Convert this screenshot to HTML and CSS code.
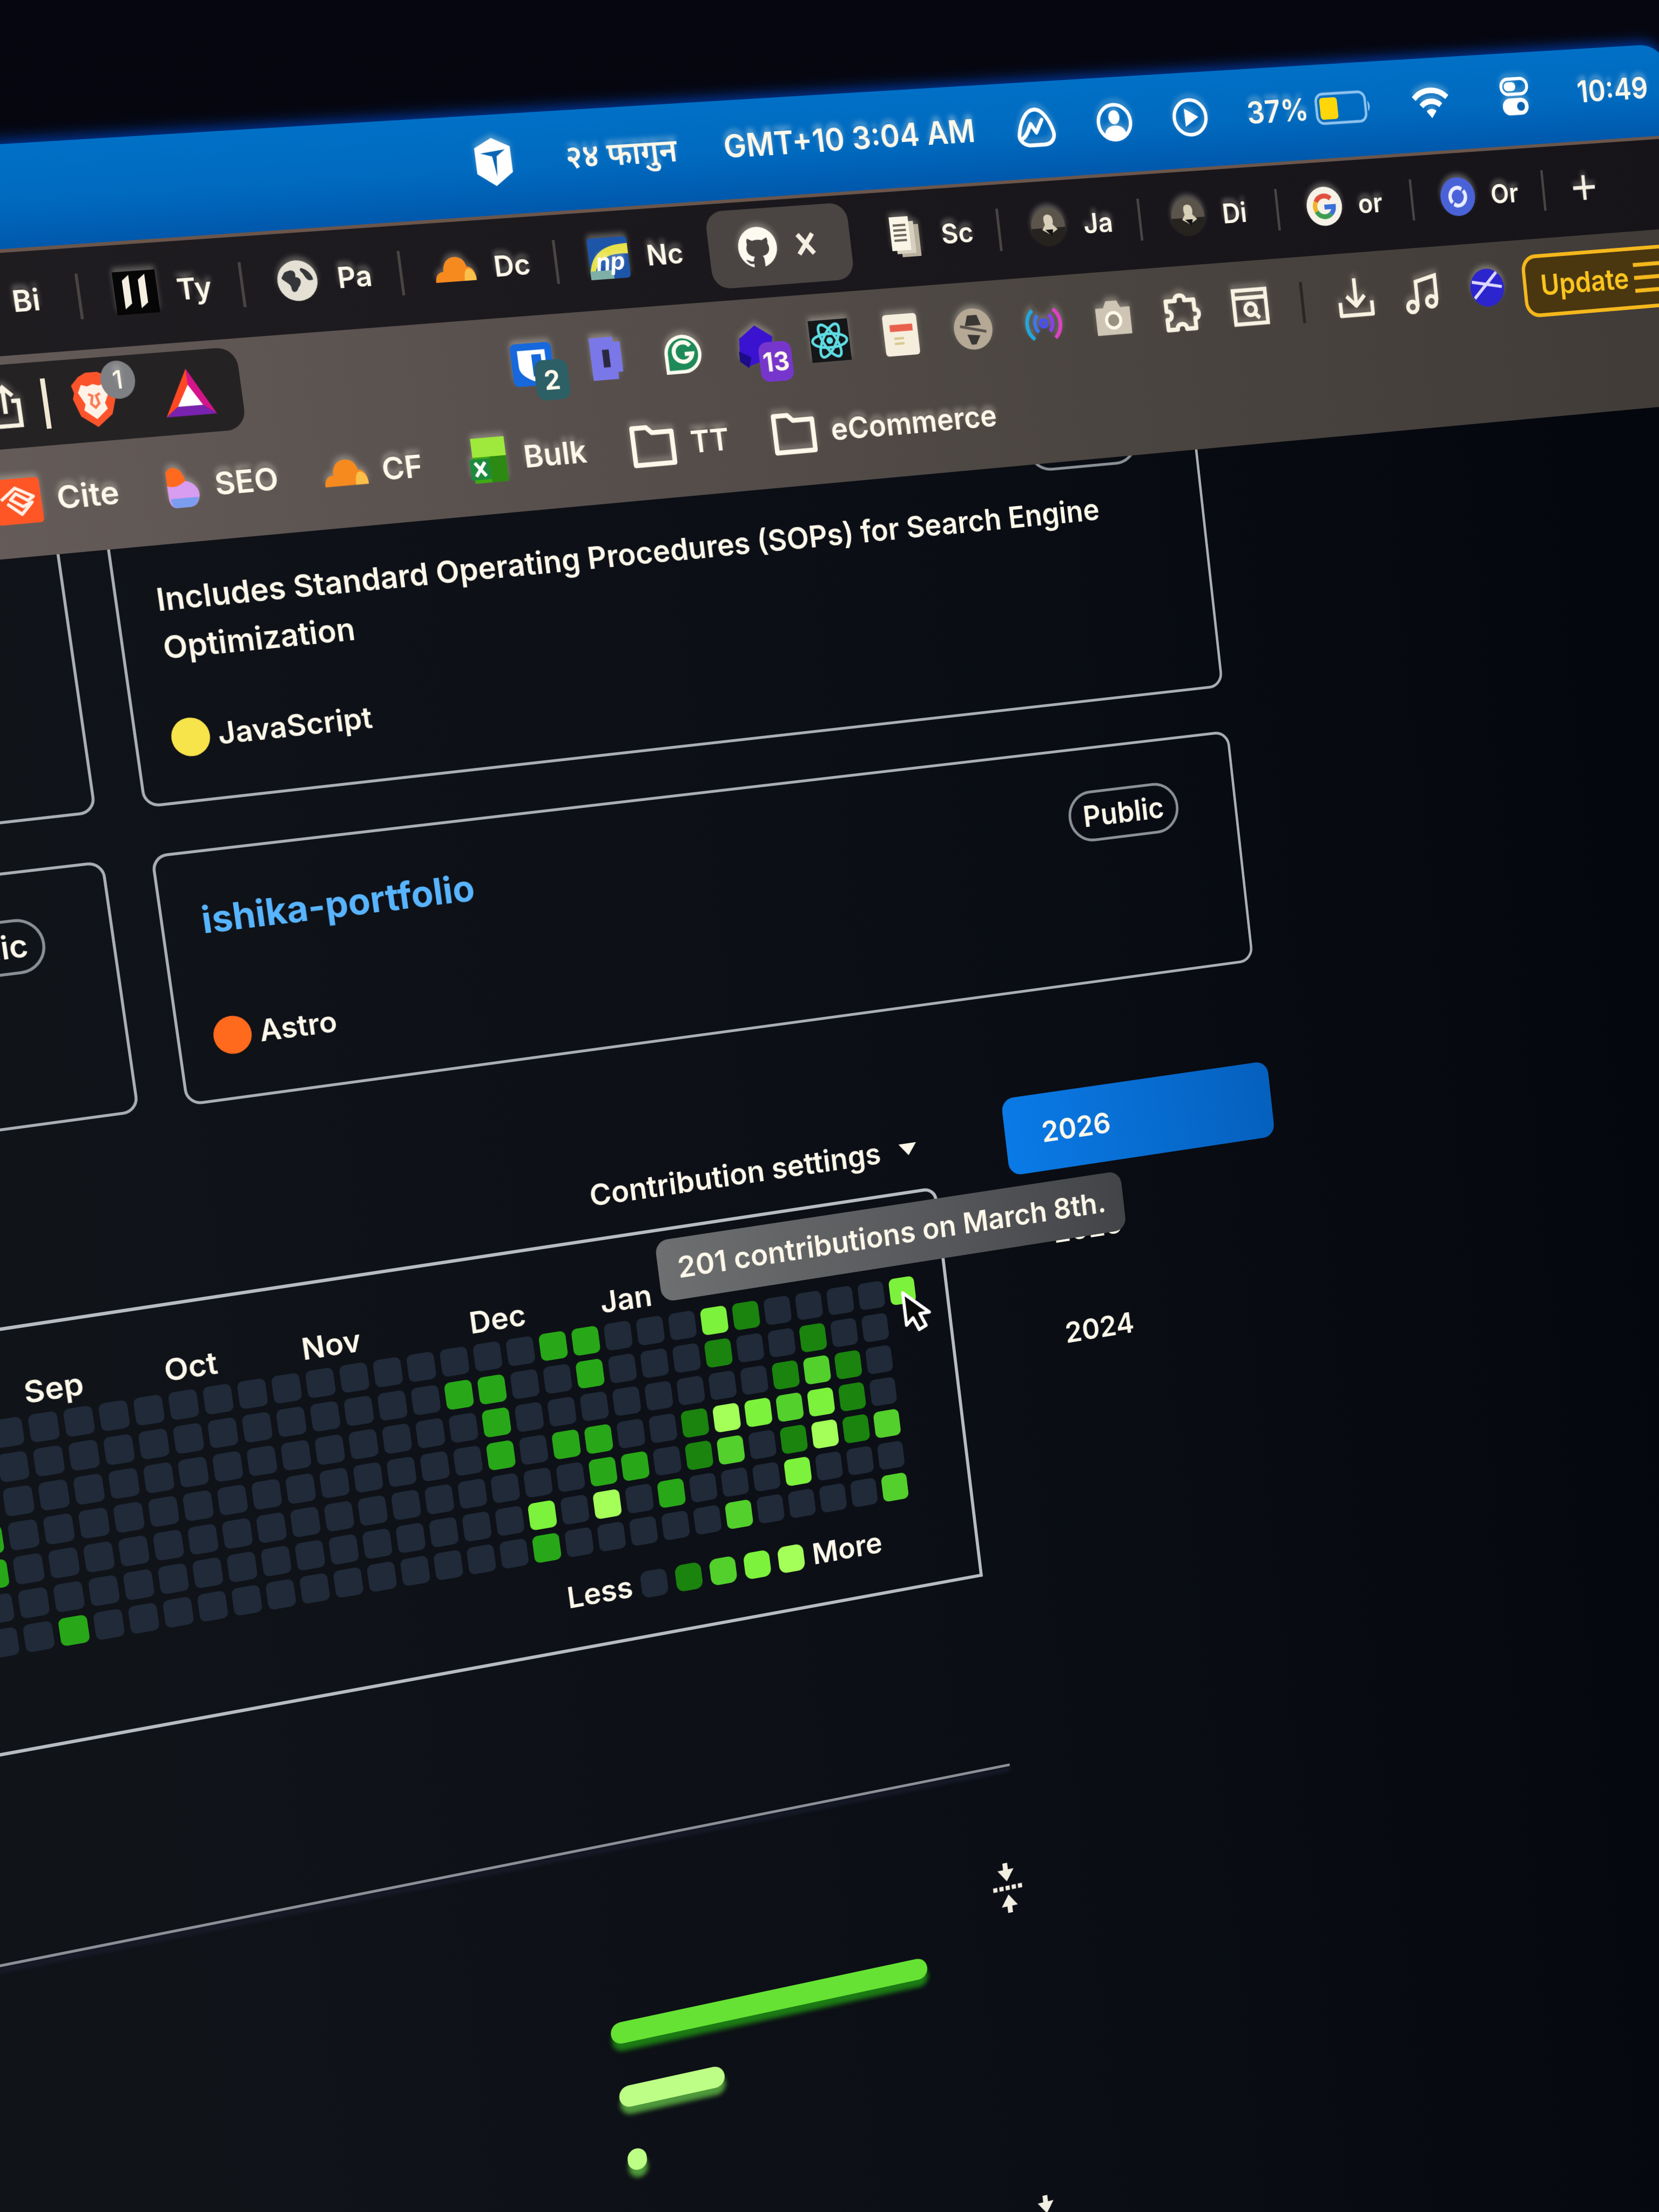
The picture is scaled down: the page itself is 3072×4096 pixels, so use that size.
FILE: index.html
```html
<!DOCTYPE html>
<html lang="en">
<head>
<meta charset="utf-8">
<title>GitHub profile</title>
<link rel="stylesheet" href="styles.css">
</head>
<body>
<div class="screen">

  <header class="menubar">
    <svg class="mi cube" viewBox="0 0 24 26"><path d="M12 0l10 5v14L12 26 2 19V5z" fill="#fff"/><path d="M5 8l14-1.500-5 3.500-1 11-1.500-11z" fill="#0a66b4"/></svg>
    <span class="date" lang="ne">२४ फागुन</span>
    <span>GMT+10 3:04 AM</span>
    <svg class="mi arc" viewBox="0 0 24 24" fill="none" stroke="#fff" stroke-width="2.200" stroke-linecap="round" stroke-linejoin="round"><path d="M1.500 16C3 8 7 2 12 2s9 7 10.500 13c.8 4-2 7-6 7H8c-4 0-7-3-6.500-6z"/><path d="M3 18c3-1 5-6 6-8l3 5 4-7"/></svg>
    <svg class="mi" viewBox="0 0 24 24"><circle cx="12" cy="12" r="10.500" fill="none" stroke="#fff" stroke-width="2.200"/><ellipse cx="12" cy="9" rx="3.600" ry="4.200" fill="#fff"/><path d="M5 19c1-4 4-5 7-5s6 1 7 5c-4 4-10 4-14 0z" fill="#fff"/></svg>
    <svg class="mi" viewBox="0 0 24 24"><circle cx="12" cy="12" r="10.500" fill="none" stroke="#fff" stroke-width="2.200"/><path d="M8.500 6.500l9 5.500-9 5.500z" fill="#fff"/></svg>
    <span class="battery">37%
      <svg viewBox="0 0 58 30"><rect x="1.500" y="1.500" width="50" height="27" rx="7" fill="none" stroke="#8fc3ee" stroke-width="2.500"/><rect x="5" y="5" width="18" height="20" rx="3" fill="#ffd60a"/><path d="M54 10q4 5 0 10z" fill="#8fc3ee"/></svg>
    </span>
    <svg class="mi wifi" viewBox="0 0 28 22" fill="none" stroke="#fff" stroke-width="3.600"><path d="M2 8.500a17 17 0 0 1 24 0"/><path d="M7 13.500a10 10 0 0 1 14 0"/><path d="M14 21.500l-3.500-4.500a5 5 0 0 1 7 0z" fill="#fff" stroke="none"/></svg>
    <svg class="mi ctl" viewBox="0 0 20 24"><rect x="1" y="1" width="18" height="9.500" rx="4.700" fill="none" stroke="#fff" stroke-width="2"/><rect x="3" y="3" width="8" height="5.500" rx="2.700" fill="#fff"/><rect x="1" y="13" width="18" height="10.500" rx="5.200" fill="#fff"/><rect x="11" y="15.500" width="5.500" height="5.500" rx="2.700" fill="#0a63b0"/></svg>
    <time class="clock">10:49</time>
  </header>

  <nav class="tabs">
    <a class="tab plain" href="#bi"><span class="fav"></span><span class="lbl">Bi</span></a>
    <a class="tab" href="#ty"><svg class="fav" viewBox="0 0 24 24"><path d="M0 0h24v24H0z" fill="#060607"/><path d="M5 21V5l4-3v16zM14 21V5l4-3v16z" fill="#f4efe0"/></svg><span class="lbl">Ty</span></a>
    <a class="tab" href="#pa"><svg class="fav" viewBox="0 0 24 24"><circle cx="12" cy="12" r="11.500" fill="#e4e0d4"/><path d="M5 7c4-2 7-1 6 3 3 0 4 3 1 6-1 3-4 3-4 0 0-3-4-4-5-6zM15 5c3 1 6 4 6 7-3 1-4-1-5-3s-3-3-1-4z" fill="#34363a"/></svg><span class="lbl">Pa</span></a>
    <a class="tab" href="#dc"><svg class="fav" viewBox="0 0 24 24"><path d="M0 19c0-4 2-6 5-6 0-5 3-8 7-8s6 2 7 6c3 0 5 3 5 8z" fill="#f68a1f"/><path d="M17 19c0-5 1-7 3-7 3 1 4 4 4 7z" fill="#fbc04b"/></svg><span class="lbl">Dc</span></a>
    <a class="tab" href="#nc"><svg class="fav" viewBox="0 0 24 24"><rect width="24" height="24" rx="2" fill="#1d55a8"/><path d="M0 20C2 9 9 4 24 4v6C12 9 6 12 3 20z" fill="#e8e24a"/><path d="M0 19h14v5H0z" fill="#7fb0a8"/><text x="4" y="19" font-family="Inter" font-size="14" font-style="italic" font-weight="700" fill="#fff">np</text></svg><span class="lbl">Nc</span></a>
    <a class="tab plain active" href="#gh"><svg class="fav" viewBox="0 0 24 24"><circle cx="12" cy="12" r="12" fill="#fdfaf0"/><path d="M6 6.500l3 1.500c2-.6 4-.6 6 0l3-1.500c.7 1.500.6 2.600.3 3.400 1.800 3.500.2 7-3.800 7.300 1 1 1 2 1 7H8.800v-2.800c-3 .6-3.500-1.600-4.800-2.400 2-.4 2.300 1.500 4.800.9 0-1 .2-1.800.9-2.600C5.600 16.800 4 13.500 5.700 9.900c-.3-.8-.4-1.900.3-3.400z" fill="#4a4443"/></svg><button class="close" type="button" aria-label="Close tab"><svg viewBox="0 0 12 14"><path d="M2 2l8 10M10 2L2 12" stroke="#f5efe2" stroke-width="2.400"/></svg></button></a>
    <a class="tab plain" href="#sc"><svg class="fav" viewBox="0 0 24 24"><path d="M9 5h12v19H9z" fill="#b8b09c"/><path d="M6 3h12v19H6z" fill="#d6d0bf"/><path d="M3 0h12v20H3z" fill="#faf5e6"/><path d="M5 5h8M5 8h8M5 11h8M5 14h8" stroke="#6b675f" stroke-width="1.300"/></svg><span class="lbl">Sc</span></a>
    <a class="tab" href="#ja"><svg class="fav" viewBox="0 0 24 24"><circle cx="12" cy="12" r="11" fill="#5a544a"/><path d="M1 13a11 11 0 0 0 22 0z" fill="#26231f"/><path d="M12 5c3 0 4 3 3 6l3 3-5 3-5-3 2-3c-1-3-1-6 2-6z" fill="#d8cfb8"/><path d="M10 14h5l-1 4z" fill="#111"/></svg><span class="lbl">Ja</span></a>
    <a class="tab" href="#di"><svg class="fav" viewBox="0 0 24 24"><circle cx="12" cy="12" r="11" fill="#5a544a"/><path d="M1 13a11 11 0 0 0 22 0z" fill="#26231f"/><path d="M12 5c3 0 4 3 3 6l3 3-5 3-5-3 2-3c-1-3-1-6 2-6z" fill="#d8cfb8"/><path d="M10 14h5l-1 4z" fill="#111"/></svg><span class="lbl">Di</span></a>
    <a class="tab" href="#or1"><svg class="fav" viewBox="0 0 24 24"><circle cx="12" cy="12" r="12" fill="#f6f2e8"/><g fill="none" stroke-width="3"><path d="M16.500 7.500A6.300 6.300 0 0 0 6.500 9" stroke="#e0503c"/><path d="M6.500 9a6.300 6.300 0 0 0 0 6" stroke="#f0b428"/><path d="M6.500 15a6.300 6.300 0 0 0 9.500 2" stroke="#3c9c50"/><path d="M16 17a6 6 0 0 0 2.300-4.500H12" stroke="#3a6fd8"/></g></svg><span class="lbl">or</span></a>
    <a class="tab" href="#or2"><svg class="fav" viewBox="0 0 24 24"><circle cx="12" cy="12" r="12" fill="#4a62d8"/><g fill="none" stroke="#e8ecff" stroke-width="2.400"><path d="M8 15.500A5.500 5.500 0 0 1 13 6.500l2 1"/><path d="M16 8.500a5.500 5.500 0 0 1-5 9l-2-1"/></g></svg><span class="lbl">Or</span></a>
    <button class="tab newtab" type="button" aria-label="New tab"><svg viewBox="0 0 14 14"><path d="M7 1v12M1 7h12" stroke="#f5efe2" stroke-width="1.800"/></svg></button>
  </nav>

  <div class="toolbar">
    <div class="tools">
      <div class="address">
        <svg class="share" viewBox="0 0 20 26" fill="none" stroke="#f8f2e2" stroke-width="2.400"><path d="M6 10H2v14h16V10h-4M10 17V2M5 7l5-5 5 5"/></svg>
        <i class="bar"></i>
        <span class="brave"><svg viewBox="0 0 24 28"><path d="M5 2l4-2h6l4 2 4 4-1 4 1 3-3 9-8 6-8-6-3-9 1-3-1-4z" fill="#fb542b"/><path d="M6 6l3 1 3-1 3 1 3-1 2 4-3 6 1 3-6 5-6-5 1-3-3-6z" fill="#fff3e8"/><path d="M9 11l2 1-1 4 2 2 2-2-1-4 2-1" fill="none" stroke="#fb7a55" stroke-width="1.300"/></svg><b>1</b></span>
        <svg class="bat" viewBox="0 0 24 22"><path d="M12 0L0 22l6-4.500L12 8z" fill="#ff4724"/><path d="M12 0l12 22-6-4.500L12 8z" fill="#d4148a"/><path d="M0 22h24l-6-4.500H6z" fill="#7a22b0"/><path d="M12 7.500l6 10H6z" fill="#fff"/></svg>
      </div>
      <div class="exts">
        <span class="slot"><svg viewBox="0 0 24 24"><rect width="24" height="24" rx="3" fill="#1668dc"/><path d="M4 4h16v9c0 4-4 6.500-8 8.500C8 19.500 4 17 4 13z" fill="#fff"/><path d="M12 6.500h5.500V13c0 2.500-2.500 4.300-5.500 6z" fill="#1668dc"/></svg><b class="badge teal">2</b></span>
        <span class="slot"><svg viewBox="0 0 24 24"><path d="M2 0h14v3h4v17h-3v4H2z" fill="#7a78e8"/><path d="M9 7h4v10H9z" fill="#2a2840"/></svg></span>
        <span class="slot"><svg viewBox="0 0 24 24"><path d="M1 24V12A11 11 0 1 1 12 24z" fill="#fdfaf0"/><path d="M3 22V12a9 9 0 1 1 9 10z" fill="#1d8a58"/><path d="M16.500 8.500a5.500 5.500 0 1 0 1 4.500H13" fill="none" stroke="#fdfaf0" stroke-width="2.400"/></svg></span>
        <span class="slot"><svg viewBox="0 0 24 24"><path d="M12 0l10 7-2 12-14 4-5-4L2 7z" fill="#3a12d0"/><path d="M1 14l7 4-2 6-5-4z" fill="#1c0c86"/></svg><b class="badge violet">13</b></span>
        <span class="slot"><svg viewBox="0 0 24 24"><rect width="24" height="24" fill="#141618"/><g fill="none" stroke="#5fdde4" stroke-width="1.600"><ellipse cx="12" cy="12" rx="10.500" ry="4"/><ellipse cx="12" cy="12" rx="10.500" ry="4" transform="rotate(60 12 12)"/><ellipse cx="12" cy="12" rx="10.500" ry="4" transform="rotate(120 12 12)"/></g><circle cx="12" cy="12" r="2" fill="#5fdde4"/></svg></span>
        <span class="slot"><svg viewBox="0 0 24 24"><rect x="1" width="21" height="24" rx="2" fill="#f6eedd"/><path d="M5 6h14v4H5z" fill="#e8604c"/><path d="M7 14h6M7 17h6" stroke="#d8c890" stroke-width="1.400"/></svg></span>
        <span class="slot"><svg viewBox="0 0 24 24"><circle cx="12" cy="12" r="12" fill="#b5a996"/><path d="M9 4h6l2 6H7zM8 15l8 1-3 5h-3z" fill="#3a3633"/><path d="M4 10l16 4" stroke="#5a534c" stroke-width="1.600"/></svg></span>
        <span class="slot"><svg viewBox="0 0 24 24" fill="none" stroke-width="2.200"><path d="M5.500 21a11 11 0 0 1 0-17" stroke="#1fa8e0"/><path d="M8.500 17a7 7 0 0 1 0-10" stroke="#3a78f0"/><path d="M18.500 21a11 11 0 0 0 0-17" stroke="#e040c8"/><path d="M15.500 17a7 7 0 0 0 0-10" stroke="#8a3ef0"/><circle cx="12" cy="12" r="2" stroke="#4a50f0"/></svg></span>
        <span class="slot"><svg viewBox="0 0 24 24"><path d="M1 6h5l2-4h7l2 4h6v16H1z" fill="#cfc5b4"/><circle cx="12" cy="13.500" r="4.500" fill="#9a9082" stroke="#fdf8ea" stroke-width="2"/></svg></span>
        <span class="slot"><svg viewBox="0 0 24 24" fill="none" stroke="#f8f2e2" stroke-width="2.600" stroke-linejoin="round"><path d="M2 5h6c-.8-4 6.800-4 6 0h6v6c3.500-.5 3.500 5.500 0 5v6h-6c.5-4-6.500-4-6 0H2v-6c4 .5 4-5.500 0-5z"/></svg></span>
        <span class="slot"><svg viewBox="0 0 24 24" fill="none" stroke="#f8f2e2" stroke-width="2.400"><path d="M1.500 2h21v20h-21zM1.500 6.500h21"/><circle cx="12" cy="13.500" r="3.500"/><path d="M14.500 16l3 3"/></svg></span>
        <i class="divider"></i>
        <span class="slot"><svg viewBox="0 0 24 24" fill="none" stroke="#f8f2e2" stroke-width="2.400" stroke-linejoin="round"><path d="M1.500 14v8h21v-8M12 0v16M6 10.500l6 6 6-6"/></svg></span>
        <span class="slot"><svg viewBox="0 0 24 24" fill="none" stroke="#f8f2e2" stroke-width="2.400"><path d="M8.500 20V5L21.500 2v15"/><circle cx="5" cy="20" r="3.200"/><circle cx="18" cy="17.500" r="3.200"/></svg></span>
        <span class="slot"><svg viewBox="0 0 24 24"><circle cx="12" cy="12" r="11.500" fill="#2c24cc"/><path d="M2 8l20 4M19 3L3 18" stroke="#dcd8ff" stroke-width="1.900"/></svg></span>
      </div>
      <button class="update" type="button">Update <svg viewBox="0 0 20 20"><path d="M0 3h20M0 10h20M0 17h20" stroke="#f5b81c" stroke-width="2.200"/></svg></button>
    </div>

    <nav class="bookmarks">
      <a href="#cite"><svg viewBox="0 0 24 24"><rect width="24" height="24" rx="2" fill="#ff5626"/><path d="M3 11l8-6 9 5-3 2-6-4-3 3 6 4 5-2-6 6-7-6" fill="none" stroke="#fff0e6" stroke-width="1.700" stroke-linejoin="round"/></svg>Cite</a>
      <a href="#seo"><svg class="slim" viewBox="0 0 18 22"><path d="M1 3c3-5 10-2 10 6l-10 5z" fill="#ff6a1e"/><path d="M1 10c5 2 8-1 10-2 5 1 8 6 6 10-1 3-3 4-6 4H5c-3 0-4-3-4-6z" fill="#d89cf0"/><path d="M2 17h15c-1 4-3 5-6 5H5c-2 0-3-2-3-5z" fill="#7c9cf0"/></svg>SEO</a>
      <a href="#cf"><svg viewBox="0 0 24 24"><path d="M0 19c0-4 2-6 5-6 0-5 3-8 7-8s6 2 7 6c3 0 5 3 5 8z" fill="#f68a1f"/><path d="M17 19c0-5 1-7 3-7 3 1 4 4 4 7z" fill="#fbc04b"/></svg>CF</a>
      <a href="#bulk"><svg viewBox="0 0 24 26"><path d="M3 0h20v26H3z" fill="#3faa14"/><path d="M3 0h20v11H3z" fill="#9fe83c"/><path d="M13 11h10v15H13z" fill="#2c8a12"/><path d="M1 12h12v12H1z" fill="#1e8a3c"/><path d="M4 14l6 8M10 14l-6 8" stroke="#fff" stroke-width="2"/></svg>Bulk</a>
      <a href="#tt"><svg class="folder" viewBox="0 0 26 24" fill="none" stroke="#fdf8ea" stroke-width="2.600" stroke-linejoin="round"><path d="M2 2h8l3 3h11v17H2z"/></svg>TT</a>
      <a href="#ecommerce"><svg class="folder" viewBox="0 0 26 24" fill="none" stroke="#fdf8ea" stroke-width="2.600" stroke-linejoin="round"><path d="M2 2h8l3 3h11v17H2z"/></svg>eCommerce</a>
    </nav>
  </div>

  <main class="viewport">
    <div class="page">
      <section class="repos">
        <article class="repo tall"></article>
        <article class="repo tall">
          <div class="repo-head"><span class="pill">Public</span></div>
          <p>Includes Standard Operating Procedures (SOPs) for Search Engine Optimization</p>
          <div class="lang"><i class="dot js"></i>JavaScript</div>
        </article>
        <article class="repo">
          <div class="repo-head"><span class="pill">Public</span></div>
        </article>
        <article class="repo">
          <div class="repo-head"><a href="#ishika-portfolio">ishika-portfolio</a><span class="pill">Public</span></div>
          <div class="lang"><i class="dot astro"></i>Astro</div>
        </article>
      </section>

      <section class="contrib">
        <div class="graph">
          <div class="graph-head"><button class="settings" type="button">Contribution settings <svg viewBox="0 0 14 9"><path d="M0 0h14L7 9z" fill="#fdf8ea"/></svg></button></div>
          <div class="calendar">
            <table>
              <thead><tr><th colspan="4"></th><th colspan="4">Sep</th><th colspan="4">Oct</th><th colspan="5">Nov</th><th colspan="4">Dec</th><th colspan="10">Jan</th></tr></thead>
              <tbody id="days"></tbody>
            </table>
            <div class="legend">Less<i class="l0"></i><i class="l1"></i><i class="l3"></i><i class="l4"></i><i class="l5"></i>More</div>
          </div>
        </div>
        <nav class="years">
          <a class="current" href="#2026">2026</a>
          <a href="#2025">2025</a>
          <a href="#2024">2024</a>
        </nav>
      </section>

      <section class="activity">
        <hr>
        <div class="fold"><svg viewBox="0 0 20 30"><path d="M10 11l-5-7h3.500V0h3v4H15zM10 19l5 7h-3.500v4h-3v-4H5z" fill="#f3eee2"/><path d="M1 15h18" stroke="#f3eee2" stroke-width="2.600" stroke-dasharray="2.600 1.250"/></svg></div>
        <div class="bars">
          <div class="meter green" style="width:610px"></div>
          <div class="meter lime" style="width:200px"></div>
          <div class="meter lime" style="width:36px"></div>
        </div>
        <div class="fold last"><svg viewBox="0 0 20 30"><path d="M10 11l-5-7h3.500V0h3v4H15zM10 19l5 7h-3.500v4h-3v-4H5z" fill="#f3eee2"/><path d="M1 15h18" stroke="#f3eee2" stroke-width="2.600" stroke-dasharray="2.600 1.250"/></svg></div>
      </section>
    </div>
  </main>
</div>

<template id="hover">
  <span class="tip" role="tooltip">201 contributions on March 8th.</span>
  <svg class="cursor" viewBox="0 0 24 36"><path d="M2 2v26l6-5 4 10 6-2.500-4-10h8z" fill="#0a0a0a" stroke="#fff" stroke-width="2.600" stroke-linejoin="round"/></svg>
</template>
<script src="calendar.js"></script>
</body>
</html>
```
FILE: calendar.js
```js
// One string per weekday, one digit per week: the contribution level.
const weekdays = [
  "0000000000000000000220004100004",
  "000000000000000022002000100100",
  "000000000000000002000000001310",
  "002000000000000002022001543410",
  "002000000000000000002201301513",
  "000000000000000000405020004000",
  "000020000000000000200000300003"
];
const body = document.getElementById("days");
weekdays.forEach((row, weekday) => {
  const tr = document.createElement("tr");
  [...row].forEach((level, week) => {
    const td = document.createElement("td");
    td.className = "l" + level;
    if (weekday === 0 && week === row.length - 1) {
      td.append(document.getElementById("hover").content.cloneNode(true));
    }
    tr.append(td);
  });
  body.append(tr);
});
```
FILE: styles.css
```css
* { box-sizing: border-box; }

html, body { height: 100%; overflow: hidden; }

body {
  margin: 0;
  background: linear-gradient(180deg, #05060f, #04060c 40%, #06080d);
  color: #fdf8ea;
  font: 600 54px/1.2 Inter, "Noto Sans", "Liberation Sans", sans-serif;
}

a { color: inherit; text-decoration: none; }
button { font: inherit; color: inherit; background: none; border: 0; padding: 0; }
svg { display: block; flex: none; }

/* The display, seen at an angle */
.screen {
  width: 122vw;
  margin-left: -600px;
  transform-origin: 600px 0;
  transform: matrix3d(1.12316, -0.055464, 0, 0.0000462203, 0.161361, 1.12779, 0, 0.0000173506, 0, 0, 1, 0, 0, 267, 0, 1);
}

/* Menu bar */
.menubar {
  display: flex;
  align-items: center;
  justify-content: flex-end;
  gap: 78px;
  height: 178px;
  padding: 0 50px 10px 0;
  border-radius: 0 60px 0 0;
  border-bottom: 6px solid #6b564c;
  background: linear-gradient(180deg, #0070c6, #006abf 55%, #0058ab);
  box-shadow: 0 -6px 24px #0038a0;
  white-space: nowrap;
  font-size: 56px;
}
.mi { width: 72px; height: 76px; }
.mi.cube { width: 76px; height: 84px; }
.date { margin: 0 8px 0 12px; }
.mi.arc { width: 80px; }
.mi.wifi { width: 80px; height: 64px; margin: 0 16px 0 4px; }
.mi.ctl { width: 60px; margin: 0 24px 0 12px; }
.battery { display: flex; align-items: center; gap: 14px; }
.battery svg { width: 116px; height: 60px; }

/* Upward bloom of the bright glyphs on the bars */
.menubar, .tabs, .toolbar { text-shadow: 0 -8px 8px rgba(255, 250, 235, .35); }
.mi, .fav, .slot svg, .bookmarks svg, .share, .newtab svg { filter: drop-shadow(0 -7px 5px rgba(255, 250, 235, .28)); }

/* Tab strip */
.tabs {
  display: flex;
  align-items: center;
  height: 170px;
  padding: 0 0 8px 416px;
  background: linear-gradient(90deg, #211e22, #1a181c 50%, #161419);
  font-size: 50px;
}
.tab {
  position: relative;
  display: flex;
  align-items: center;
  flex: none;
  gap: 33px;
  width: 276px;
  height: 76px;
  padding-left: 57px;
  border-left: 5px solid #4a4443;
}
.tab.plain { border-color: transparent; }
.fav { width: 72px; height: 76px; flex: none; }
.tab.active {
  width: 264px;
  height: 136px;
  margin: 0 6px;
  padding-left: 54px;
  border: 0;
  border-radius: 32px;
  background: #4a4443;
}
.close svg { width: 42px; height: 50px; }
.newtab svg { width: 54px; height: 54px; }

/* Toolbar */
.toolbar {
  height: 336px;
  background: linear-gradient(90deg, #655c59 12%, #574f4c 40%, #49443f 70%, #403b37);
}
.tools { display: flex; align-items: center; height: 168px; }
.address {
  display: flex;
  align-items: center;
  justify-content: flex-end;
  flex: 1;
  height: 140px;
  padding-right: 47px;
  border-radius: 0 34px 34px 0;
  background: #252224;
}
.share { width: 60px; height: 76px; }
.bar { width: 8px; height: 84px; margin: 0 38px 0 34px; background: #f0e8d4; }
.brave { position: relative; margin-right: 76px; }
.brave svg { width: 80px; height: 92px; }
.brave b {
  position: absolute;
  top: -16px;
  right: -32px;
  width: 58px;
  height: 64px;
  border-radius: 50%;
  background: #7f8084;
  font: 500 42px/64px Inter, sans-serif;
  text-align: center;
}
.bat { width: 86px; height: 84px; }
.exts { display: flex; align-items: center; margin: 0 7px 0 444px; }
.slot { position: relative; display: grid; place-items: center; width: 137px; }
.slot svg { width: 74px; height: 76px; }
.badge {
  position: absolute;
  top: 32px;
  left: 70px;
  min-width: 60px;
  height: 70px;
  padding: 0 6px;
  border-radius: 16px;
  font: 700 46px/70px Inter, sans-serif;
  text-align: center;
  text-shadow: none;
}
.teal { background: #2c5f66; }
.violet { background: #7636cc; }
.divider { width: 6px; height: 76px; margin: 0 38px 0 34px; background: #2a2625; }
.update {
  display: flex;
  align-items: center;
  flex: none;
  gap: 12px;
  width: 356px;
  height: 118px;
  margin-top: 8px;
  padding-left: 30px;
  border: 7px solid #f5b81c;
  border-radius: 30px;
  background: #4a3710;
  color: #ffc61e;
  text-shadow: none;
}
.update svg { width: 70px; height: 70px; }

.bookmarks { display: flex; align-items: center; gap: 79px; height: 148px; padding-left: 508px; }
.bookmarks a { display: flex; align-items: center; gap: 26px; }
.bookmarks svg { width: 76px; height: 78px; }
.bookmarks svg.slim { width: 58px; height: 70px; }
.bookmarks svg.folder { width: 86px; }

/* Web page */
.viewport { overflow: hidden; background: linear-gradient(90deg, #101318 12%, #0b0e15 55%, #04060d); }
.page { margin-top: -161px; padding: 0 1058px 400px 0; }

.repos {
  display: grid;
  grid-template-columns: repeat(2, 2009px);
  justify-content: end;
  gap: 81px 80px;
}
.repo {
  display: flex;
  flex-direction: column;
  height: 436px;
  padding: 76px 66px 72px;
  border: 5px solid #a9afb4;
  border-radius: 28px;
}
.repo.tall { height: 602px; }
.repo-head { display: flex; align-items: center; height: 94px; }
.repo-head a { padding-bottom: 14px; color: #58b4ff; font-size: 64px; font-weight: 700; }
.pill {
  margin: 0 46px 0 auto;
  height: 94px;
  padding: 0 24px;
  border: 5px solid #8a9096;
  border-radius: 47px;
  line-height: 84px;
}
.repo p { margin: 37px 0 0; line-height: 82px; }
.lang { display: flex; align-items: center; gap: 14px; margin: auto 0 0 -8px; font-size: 52px; line-height: 70px; }
.dot { width: 66px; height: 66px; border-radius: 50%; }
.js { background: #f7e34a; }
.astro { background: #ff6a1c; }

.contrib { display: flex; gap: 145px; margin-top: 190px; }
.graph { flex: 1; min-width: 0; }
.graph-head { display: flex; align-items: center; justify-content: flex-end; height: 143px; padding: 0 28px 8px 0; }
.settings { display: flex; align-items: center; gap: 36px; }
.settings svg { width: 34px; height: 22px; }
.calendar {
  display: flex;
  flex-direction: column;
  align-items: flex-end;
  padding: 76px 47px 62px 0;
  border: 6px solid #b6bcc2;
  border-radius: 0 24px 0 0;
}
.calendar table { border-spacing: 11px; table-layout: fixed; width: 1871px; }
.calendar th { height: 53px; padding: 0; font-weight: 600; line-height: 49px; text-align: left; vertical-align: top; }
.calendar td { position: relative; height: 49px; padding: 0; border-radius: 10px; }
.legend { display: flex; align-items: center; gap: 16px; height: 60px; margin: 32px 133px 0 0; }
.legend i { width: 49px; height: 49px; border-radius: 14px; }
.l0 { background: #202a39; }
.l1 { background: #1a840e; }
.l2 { background: #28a818; }
.l3 { background: #53d02c; }
.l4 { background: #7cf23c; }
.l5 { background: #a4ff58; }

.tip {
  position: absolute;
  left: 50%;
  bottom: 72px;
  z-index: 2;
  height: 112px;
  padding: 0 36px;
  border-radius: 24px;
  background: linear-gradient(90deg, #6e6f70, #56575a 60%, #434447);
  line-height: 108px;
  white-space: nowrap;
  transform: translateX(-50%);
}
.cursor { position: absolute; left: 20px; top: 24px; z-index: 3; width: 56px; height: 84px; }

.years { display: flex; flex-direction: column; flex: none; gap: 46px; width: 536px; margin-right: -4px; }
.years a { height: 144px; padding-left: 72px; border-radius: 24px; line-height: 144px; }
.years .current { background: linear-gradient(90deg, #0a7ae6, #0560bd); }

.activity { margin: 361px 632px 0 0; }
.activity hr { margin: 0 37px 0 0; border: 0; border-top: 5px solid #8c8f96; box-shadow: 0 8px 8px #23243c; }
.fold { display: flex; justify-content: flex-end; margin: 182px 37px 0 0; }
.fold svg { width: 66px; height: 96px; }
.fold.last { margin-top: 226px; }
.bars { display: flex; flex-direction: column; gap: 80px; padding: 50px 0 0 1203px; }
.meter { height: 40px; border-radius: 20px; }
.green { background: #66e234; box-shadow: 0 14px 8px #1c7c14; }
.lime { background: #bdff86; box-shadow: 0 14px 8px #4f9a3c; }
```
